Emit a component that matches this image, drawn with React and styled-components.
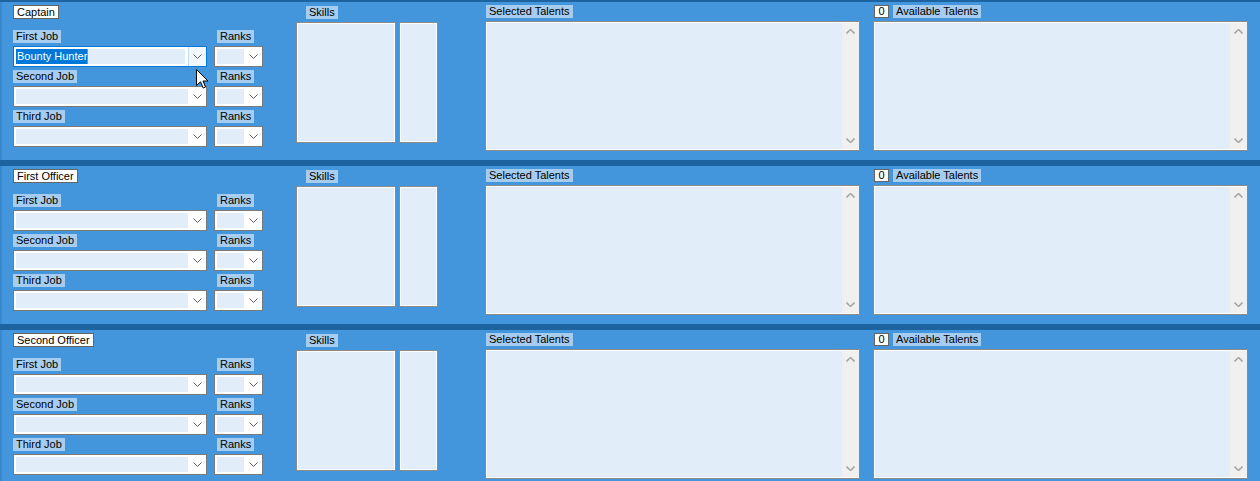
import React from "react";
import styled, { createGlobalStyle } from "styled-components";

const GlobalStyle = createGlobalStyle`
  html, body {
    margin: 0;
    padding: 0;
  }
  body {
    width: 1260px;
    height: 481px;
    overflow: hidden;
    background: #1d63a0;
    font-family: "Liberation Sans", Arial, sans-serif;
    font-size: 11px;
    color: #000;
  }
`;

const Page = styled.div`
  position: relative;
  display: flex;
  flex-direction: column;
  gap: 6px;
  padding-top: 2px;
  height: 481px;
  overflow: hidden;
  box-sizing: border-box;
`;

const Panel = styled.section`
  display: flex;
  align-items: flex-start;
  flex-shrink: 0;
  height: 158px;
  box-sizing: border-box;
  background: #4496dc;
  border-left: 2px solid #3a89cf;
  padding: 3px 12px 0 11px;
`;

const JobColumn = styled.div`
  display: flex;
  flex-direction: column;
  width: 250px;
`;

const TitleBox = styled.div`
  align-self: flex-start;
  height: 14px;
  line-height: 12px;
  box-sizing: border-box;
  padding: 0 3px;
  background: #fff;
  border: 1px solid #646464;
  margin-bottom: 11px;
`;

const JobRow = styled.div`
  display: grid;
  grid-template-columns: 194px 49px;
  column-gap: 7px;
  row-gap: 3px;
  margin-bottom: 3px;
`;

const FieldLabel = styled.div`
  justify-self: start;
  align-self: flex-start;
  height: 13px;
  line-height: 13px;
  padding: 0 3px;
  background: #a6cdef;
  margin-left: ${(p) => p.$inset || 0}px;
  white-space: nowrap;
`;

const Combo = styled.div`
  display: flex;
  height: 21px;
  box-sizing: border-box;
  padding: 2px 0 2px 2px;
  background: #fff;
  border: 1px solid ${(p) => (p.$focused ? "#0078d7" : "#7a7a7a")};
`;

const ComboField = styled.div`
  flex: 1;
  background: #e1edf9;
  display: flex;
  align-items: center;
  line-height: 15px;
  margin-right: ${(p) => (p.$focused ? 3 : 0)}px;
`;

const Selection = styled.span`
  background: #0078d7;
  color: #fff;
  padding: 0 0 0 1px;
  height: 15px;
  border-right: 1px solid #e07a2a;
`;

const ComboButton = styled.div`
  width: 17px;
  margin-top: -2px;
  margin-bottom: -2px;
  display: flex;
  align-items: center;
  justify-content: center;
  background: ${(p) => (p.$focused ? "#f2f8fd" : "#fff")};
  border-left: 1px solid ${(p) => (p.$focused ? "#c4dcf2" : "transparent")};
`;

const SkillsColumn = styled.div`
  display: flex;
  flex-direction: column;
  margin-left: 33px;
  padding-top: 1px;
`;

const BoxRow = styled.div`
  display: flex;
  gap: 3px;
  margin-top: 3px;
`;

const ListBox = styled.div`
  width: ${(p) => p.$width}px;
  height: 121px;
  box-sizing: border-box;
  background: #e1edf9;
  border: 1px solid #8a8a8a;
  box-shadow: inset 0 0 0 1px #fff;
`;

const TalentColumn = styled.div`
  display: flex;
  flex-direction: column;
  margin-left: ${(p) => p.$offset}px;
`;

const TalentHeader = styled.div`
  display: flex;
  align-items: center;
  gap: 4px;
  padding-left: 1px;
`;

const CountBox = styled.div`
  width: 15px;
  height: 13px;
  box-sizing: border-box;
  line-height: 11px;
  text-align: center;
  background: #fff;
  border: 1px solid #646464;
`;

const TalentBox = styled.div`
  display: flex;
  width: 375px;
  height: 130px;
  margin-top: 3px;
  box-sizing: border-box;
  border: 1px solid #8a8a8a;
  background: #fff;
  padding: 1px 0 1px 1px;
`;

const TalentList = styled.div`
  flex: 1;
  background: #e1edf9;
`;

const ScrollBar = styled.div`
  width: 17px;
  background: #f0f0f0;
  display: flex;
  flex-direction: column;
  justify-content: space-between;
`;

const ScrollArrow = styled.div`
  height: 17px;
  display: flex;
  align-items: center;
  justify-content: center;
`;

const Cursor = styled.svg`
  position: absolute;
  left: 196px;
  top: 69px;
`;

const Chevron = ({ up, color = "#606060", width = 1 }) => (
  <svg width="9" height="5" viewBox="0 0 9 5">
    <polyline
      points={up ? "0.5,4.5 4.5,0.5 8.5,4.5" : "0.5,0.5 4.5,4.5 8.5,0.5"}
      fill="none"
      stroke={color}
      strokeWidth={width}
    />
  </svg>
);

const JobSelect = ({ label, value }) => (
  <JobRow>
    <FieldLabel>{label}</FieldLabel>
    <FieldLabel $inset={3}>Ranks</FieldLabel>
    <Combo $focused={!!value}>
      <ComboField $focused={!!value}>
        {value && <Selection>{value}</Selection>}
      </ComboField>
      <ComboButton $focused={!!value}>
        <Chevron />
      </ComboButton>
    </Combo>
    <Combo>
      <ComboField />
      <ComboButton>
        <Chevron />
      </ComboButton>
    </Combo>
  </JobRow>
);

const Talents = () => (
  <TalentBox>
    <TalentList />
    <ScrollBar>
      <ScrollArrow>
        <Chevron up color="#a8a8a8" width={1.6} />
      </ScrollArrow>
      <ScrollArrow>
        <Chevron color="#a8a8a8" width={1.6} />
      </ScrollArrow>
    </ScrollBar>
  </TalentBox>
);

const crew = [
  { title: "Captain", job: "Bounty Hunter" },
  { title: "First Officer" },
  { title: "Second Officer" },
];

export default function App() {
  return (
    <>
      <GlobalStyle />
      <Page>
        {crew.map((member) => (
          <Panel key={member.title}>
            <JobColumn>
              <TitleBox>{member.title}</TitleBox>
              <JobSelect label="First Job" value={member.job} />
              <JobSelect label="Second Job" />
              <JobSelect label="Third Job" />
            </JobColumn>

            <SkillsColumn>
              <FieldLabel $inset={10}>Skills</FieldLabel>
              <BoxRow>
                <ListBox $width={100} />
                <ListBox $width={39} />
              </BoxRow>
            </SkillsColumn>

            <TalentColumn $offset={47}>
              <TalentHeader>
                <FieldLabel>Selected Talents</FieldLabel>
              </TalentHeader>
              <Talents />
            </TalentColumn>

            <TalentColumn $offset={13}>
              <TalentHeader>
                <CountBox>0</CountBox>
                <FieldLabel>Available Talents</FieldLabel>
              </TalentHeader>
              <Talents />
            </TalentColumn>
          </Panel>
        ))}

        <Cursor width="13" height="21" viewBox="0 0 13 21">
          <path
            d="M0.5 0.5 L0.5 16.5 L4.5 12.8 L7.2 19 L9.6 18 L7 12 L12 12 Z"
            fill="#fff"
            stroke="#000"
            strokeWidth="1"
            strokeLinejoin="miter"
          />
        </Cursor>
      </Page>
    </>
  );
}
